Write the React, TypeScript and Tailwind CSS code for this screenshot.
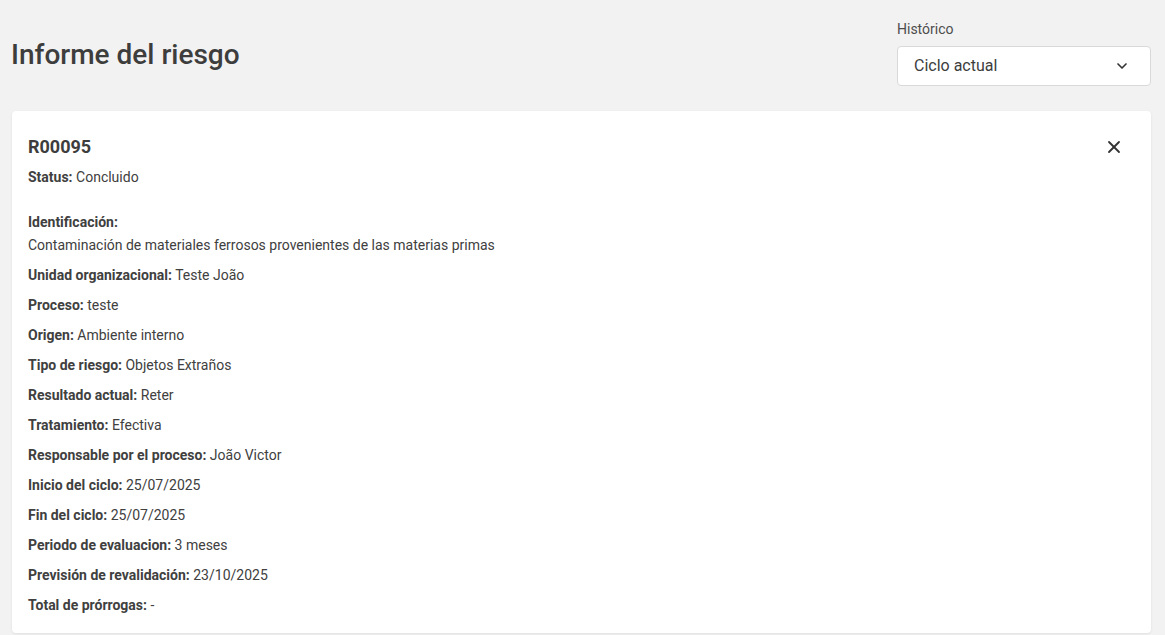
import React from "react";
import { X, ChevronDown } from "lucide-react";

const rows: [string, string][] = [
  ["Unidad organizacional:", "Teste João"],
  ["Proceso:", "teste"],
  ["Origen:", "Ambiente interno"],
  ["Tipo de riesgo:", "Objetos Extraños"],
  ["Resultado actual:", "Reter"],
  ["Tratamiento:", "Efectiva"],
  ["Responsable por el proceso:", "João Victor"],
  ["Inicio del ciclo:", "25/07/2025"],
  ["Fin del ciclo:", "25/07/2025"],
  ["Periodo de evaluacion:", "3 meses"],
  ["Previsión de revalidación:", "23/10/2025"],
  ["Total de prórrogas:", "-"],
];

export default function App() {
  return (
    <div className="min-h-[635px] bg-[#f2f2f2] pl-[11px] pr-[14px] pt-5 text-[#404040]" style={{ fontFamily: "Roboto, 'Noto Sans', sans-serif" }}>
      <div className="flex items-center justify-between">
        <h1 className="mt-[3px] text-[28px] leading-[34px] font-medium text-[#3d3d3d]">Informe del riesgo</h1>
        <div className="w-[254px]">
          <div className="text-[14px] leading-[18px] text-[#4d4d4d]">Histórico</div>
          <div className="mt-[8px] flex h-[40px] items-center justify-between rounded-[4px] border border-[#d9d9d9] bg-white pl-4 pr-[20px]">
            <span className="text-[16px] text-[#3d3d3d]">Ciclo actual</span>
            <ChevronDown size={16} strokeWidth={2.5} className="text-[#333]" />
          </div>
        </div>
      </div>
      <div className="ml-px mt-[25px] rounded-[4px] bg-white px-4 pt-6 pb-4 shadow-[0_1px_3px_rgba(0,0,0,0.08)]">
        <div className="flex items-start justify-between">
          <div className="text-[18px] leading-[24px] font-bold text-[#3d3d3d]">R00095</div>
          <X size={20} strokeWidth={2.2} className="mr-[11px] mt-[2px] text-[#333]" />
        </div>
        <div className="mt-[7px] text-[14px] leading-[23px]">
          <span className="font-bold">Status:</span> Concluido
        </div>
        <div className="mt-[22px] text-[14px] leading-[23px]">
          <div className="font-bold">Identificación:</div>
          <div>Contaminación de materiales ferrosos provenientes de las materias primas</div>
        </div>
        {rows.map(([k, v]) => (
          <div key={k} className="mt-[7px] text-[14px] leading-[23px]">
            <span className="font-bold">{k}</span> {v}
          </div>
        ))}
      </div>
    </div>
  );
}
